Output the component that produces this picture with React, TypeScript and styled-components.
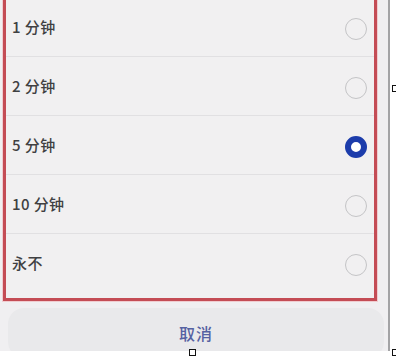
import React from "react"
import styled, { createGlobalStyle } from "styled-components"

const GlobalStyle = createGlobalStyle`
  html, body {
    margin: 0;
    padding: 0;
    background: #ffffff;
  }
`

const options = [
  { label: "1 分钟", selected: false },
  { label: "2 分钟", selected: false },
  { label: "5 分钟", selected: true },
  { label: "10 分钟", selected: false },
  { label: "永不", selected: false },
]

const App: React.FC = () => {
  return (
    <Page>
      <GlobalStyle />
      <Screen>
        <OptionBox>
          {options.map((opt, i) => (
            <OptionRow key={opt.label} last={i === options.length - 1}>
              <OptionLabel>{opt.label}</OptionLabel>
              <Radio selected={opt.selected} />
            </OptionRow>
          ))}
        </OptionBox>
        <CancelButton>取消</CancelButton>
      </Screen>
      <Handle style={{ left: 392, top: 85 }} />
      <Handle style={{ left: 189, top: 349 }} />
      <Handle style={{ left: 392, top: 349 }} />
    </Page>
  )
}

const Page = styled.div`
  position: relative;
  width: 396px;
  height: 359px;
  overflow: hidden;
  background: #ffffff;
  font-family: "Noto Sans CJK SC", "Noto Sans", sans-serif;
`

const Screen = styled.div`
  display: flex;
  flex-direction: column;
  width: 388px;
  height: 351px;
  overflow: hidden;
  background: #f0eff1;
  border-right: 2px solid #a3a3a5;
`

const OptionBox = styled.div`
  display: flex;
  flex-direction: column;
  flex-shrink: 0;
  width: 368px;
  margin: -5px 0 0 3px;
  padding-bottom: 5px;
  border: 3px solid #c44c55;
  box-shadow: 0 0 0 1px rgba(240, 170, 175, 0.5);
  background: #f1f0f1;
`

const OptionRow = styled.div<{ last?: boolean }>`
  display: flex;
  align-items: center;
  justify-content: space-between;
  height: ${(p) => (p.last ? "59px" : "58px")};
  padding: 0 7px 0 6px;
  border-bottom: ${(p) => (p.last ? "none" : "1px solid #e1e0e2")};
`

const OptionLabel = styled.div`
  font-size: 15px;
  font-weight: 500;
  color: #404042;
  letter-spacing: 0.4px;
  margin-top: -2px;
`

const Radio = styled.div<{ selected?: boolean }>`
  box-sizing: border-box;
  width: 22px;
  height: 22px;
  border-radius: 50%;
  margin-top: 3px;
  border: ${(p) => (p.selected ? "6px solid #1c3cab" : "1.5px solid #c4c4c6")};
  background: ${(p) => (p.selected ? "#ffffff" : "transparent")};
`

const CancelButton = styled.div`
  display: flex;
  flex-shrink: 0;
  align-items: center;
  justify-content: center;
  margin: 7px 4px 0 8px;
  height: 50px;
  box-sizing: border-box;
  border-radius: 16px;
  background: #e9e9eb;
  font-size: 16px;
  font-weight: 500;
  color: #5662a2;
  letter-spacing: 1px;
`

const Handle = styled.div`
  position: absolute;
  width: 5px;
  height: 5px;
  border: 1px solid #111111;
  background: #ffffff;
`

export default App
